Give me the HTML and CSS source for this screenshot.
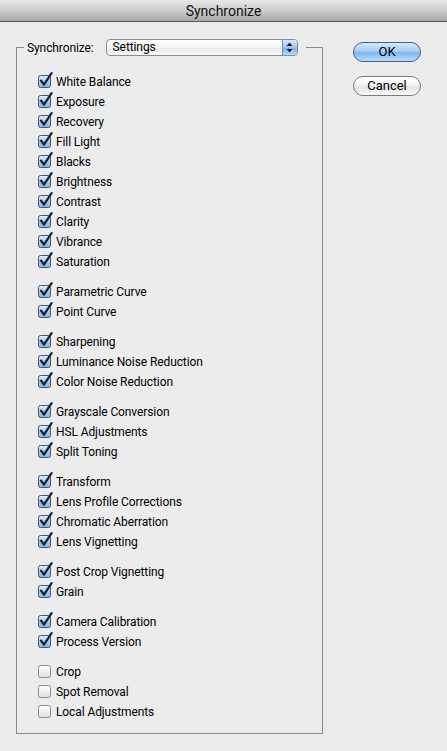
FILE: index.html
```html
<!DOCTYPE html>
<html>
<head>
<meta charset="utf-8">
<link rel="stylesheet" href="styles.css">
</head>
<body>
<svg class="defs" width="0" height="0" aria-hidden="true">
  <defs>
    <linearGradient id="gOn" x1="0" y1="0" x2="0" y2="1">
      <stop offset="0" stop-color="#e4f0fb"/>
      <stop offset="0.5" stop-color="#a9cdef"/>
      <stop offset="1" stop-color="#7fb3e6"/>
    </linearGradient>
    <linearGradient id="gOff" x1="0" y1="0" x2="0" y2="1">
      <stop offset="0" stop-color="#ffffff"/>
      <stop offset="0.5" stop-color="#f0f0f0"/>
      <stop offset="1" stop-color="#dcdcdc"/>
    </linearGradient>
    <symbol id="cbOn" viewBox="0 0 16 17">
      <rect x="0.5" y="3.5" width="12" height="12" rx="2" fill="url(#gOn)" stroke="#4d5866"/>
      <path d="M3 8.6 L6 12.6 L13.6 1.2" fill="none" stroke="#17233a" stroke-width="2.3" stroke-linecap="round" stroke-linejoin="round"/>
    </symbol>
    <symbol id="cbOff" viewBox="0 0 16 17">
      <rect x="0.5" y="3.5" width="12" height="12" rx="2" fill="url(#gOff)" stroke="#8d8d8d"/>
    </symbol>
  </defs>
</svg>

<div class="titlebar">Synchronize</div>

<div class="main">
  <fieldset class="group">
    <legend class="legend">
      <span class="legend-label">Synchronize:</span>
      <span class="popup">
        <span class="popup-text">Settings</span>
        <span class="stepper">
          <svg width="7" height="11" viewBox="0 0 7 11"><path d="M3.5 0.5 L6.5 4 L0.5 4 Z M3.5 10.5 L6.5 7 L0.5 7 Z" fill="#10203a"/></svg>
        </span>
      </span>
    </legend>

    <div class="list">
      <div class="section">
        <div class="row"><svg class="cb"><use href="#cbOn"/></svg><span>White Balance</span></div>
        <div class="row"><svg class="cb"><use href="#cbOn"/></svg><span>Exposure</span></div>
        <div class="row"><svg class="cb"><use href="#cbOn"/></svg><span>Recovery</span></div>
        <div class="row"><svg class="cb"><use href="#cbOn"/></svg><span>Fill Light</span></div>
        <div class="row"><svg class="cb"><use href="#cbOn"/></svg><span>Blacks</span></div>
        <div class="row"><svg class="cb"><use href="#cbOn"/></svg><span>Brightness</span></div>
        <div class="row"><svg class="cb"><use href="#cbOn"/></svg><span>Contrast</span></div>
        <div class="row"><svg class="cb"><use href="#cbOn"/></svg><span>Clarity</span></div>
        <div class="row"><svg class="cb"><use href="#cbOn"/></svg><span>Vibrance</span></div>
        <div class="row"><svg class="cb"><use href="#cbOn"/></svg><span>Saturation</span></div>
      </div>
      <div class="section">
        <div class="row"><svg class="cb"><use href="#cbOn"/></svg><span>Parametric Curve</span></div>
        <div class="row"><svg class="cb"><use href="#cbOn"/></svg><span>Point Curve</span></div>
      </div>
      <div class="section">
        <div class="row"><svg class="cb"><use href="#cbOn"/></svg><span>Sharpening</span></div>
        <div class="row"><svg class="cb"><use href="#cbOn"/></svg><span>Luminance Noise Reduction</span></div>
        <div class="row"><svg class="cb"><use href="#cbOn"/></svg><span>Color Noise Reduction</span></div>
      </div>
      <div class="section">
        <div class="row"><svg class="cb"><use href="#cbOn"/></svg><span>Grayscale Conversion</span></div>
        <div class="row"><svg class="cb"><use href="#cbOn"/></svg><span>HSL Adjustments</span></div>
        <div class="row"><svg class="cb"><use href="#cbOn"/></svg><span>Split Toning</span></div>
      </div>
      <div class="section">
        <div class="row"><svg class="cb"><use href="#cbOn"/></svg><span>Transform</span></div>
        <div class="row"><svg class="cb"><use href="#cbOn"/></svg><span>Lens Profile Corrections</span></div>
        <div class="row"><svg class="cb"><use href="#cbOn"/></svg><span>Chromatic Aberration</span></div>
        <div class="row"><svg class="cb"><use href="#cbOn"/></svg><span>Lens Vignetting</span></div>
      </div>
      <div class="section">
        <div class="row"><svg class="cb"><use href="#cbOn"/></svg><span>Post Crop Vignetting</span></div>
        <div class="row"><svg class="cb"><use href="#cbOn"/></svg><span>Grain</span></div>
      </div>
      <div class="section">
        <div class="row"><svg class="cb"><use href="#cbOn"/></svg><span>Camera Calibration</span></div>
        <div class="row"><svg class="cb"><use href="#cbOn"/></svg><span>Process Version</span></div>
      </div>
      <div class="section">
        <div class="row"><svg class="cb"><use href="#cbOff"/></svg><span>Crop</span></div>
        <div class="row"><svg class="cb"><use href="#cbOff"/></svg><span>Spot Removal</span></div>
        <div class="row"><svg class="cb"><use href="#cbOff"/></svg><span>Local Adjustments</span></div>
      </div>
    </div>
  </fieldset>

  <div class="buttons">
    <button class="btn btn-default">OK</button>
    <button class="btn">Cancel</button>
  </div>
</div>
</body>
</html>
```

FILE: styles.css
```css
html, body {
  margin: 0;
  padding: 0;
}

body {
  background: #ececec;
  font-family: Roboto, "Liberation Sans", sans-serif;
  font-size: 12px;
  letter-spacing: -0.1px;
  color: #000;
  width: 447px;
  height: 751px;
  overflow: hidden;
}

.defs {
  position: absolute;
  width: 0;
  height: 0;
}

.titlebar {
  height: 21px;
  border-bottom: 1px solid #565656;
  background: linear-gradient(#e9e9e9, #c9c9c9 55%, #a7a7a7);
  text-align: center;
  font-size: 14px;
  letter-spacing: 0;
  line-height: 22px;
  color: #111;
}

.main {
  display: flex;
  align-items: flex-start;
}

.group {
  margin: 17px 0 0 16px;
  padding: 0 0 11px 0;
  width: 305px;
  min-width: 0;
  border: 1px solid #8a8a8a;
  box-sizing: content-box;
}

.legend {
  display: flex;
  align-items: center;
  margin-left: 7px;
  padding: 0 8px 0 3px;
  height: 17px;
}

.legend-label {
  margin-right: 12px;
}

.popup {
  display: flex;
  width: 190px;
  height: 15px;
  border: 1px solid #8c8c8c;
  border-radius: 4px;
  background: linear-gradient(#ffffff, #f3f3f3 50%, #e8e8e8 55%, #f7f7f7);
  overflow: hidden;
}

.popup-text {
  flex: 1;
  padding-left: 6px;
  line-height: 15px;
}

.stepper {
  width: 14px;
  border-left: 1px solid #6f8fb8;
  background: linear-gradient(#d9e9fa, #9cc5f0 50%, #7fb2ea 55%, #b7d8f8);
  display: flex;
  align-items: center;
  justify-content: center;
}

.list {
  padding: 16px 0 0 21px;
  display: flex;
  flex-direction: column;
  gap: 10px;
}

.row {
  display: flex;
  align-items: center;
  height: 20px;
}

.cb {
  width: 16px;
  height: 17px;
  margin-top: -4px;
  margin-right: 2px;
  overflow: visible;
  flex: none;
}

.buttons {
  display: flex;
  flex-direction: column;
  gap: 14px;
  margin: 20px 0 0 30px;
}

.btn {
  width: 68px;
  height: 20px;
  border-radius: 10px;
  border: 1px solid #7a7a7a;
  background: linear-gradient(#ffffff, #f4f4f4 45%, #e2e2e2 55%, #fbfbfb);
  font-family: Roboto, "Liberation Sans", sans-serif;
  font-size: 13px;
  color: #000;
  padding: 0;
  line-height: 18px;
}

.btn-default {
  border-color: #3f5f93;
  background: linear-gradient(#d6e8fc, #a7cdf5 45%, #80b6ee 55%, #b9dcfb);
}
```
